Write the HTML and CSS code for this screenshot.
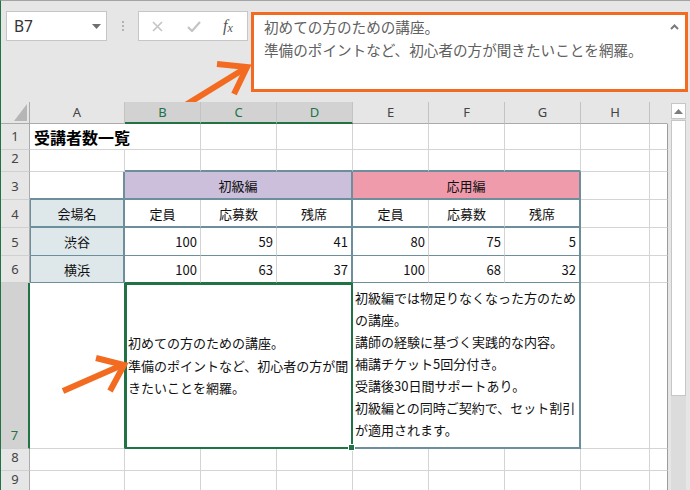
FILE: index.html
```html
<!DOCTYPE html>
<html lang="ja">
<head>
<meta charset="utf-8">
<title>受講者数一覧</title>
<link rel="stylesheet" href="styles.css">
</head>
<body>
<div class="app">
  <div class="fbar">
    <div class="namebox"><span>B7</span><svg class="dd" width="9" height="5" viewBox="0 0 9 5"><path d="M0 0H9L4.5 5Z" fill="#6f6f6f"/></svg></div>
    <div class="grip"><i></i><i></i><i></i></div>
    <div class="fxbox">
      <svg class="ico-x" width="11" height="11" viewBox="0 0 11 11"><path d="M1 1L10 10M10 1L1 10" stroke="#c4c4c4" stroke-width="1.6" fill="none"/></svg>
      <svg class="ico-ok" width="14" height="11" viewBox="0 0 14 11"><path d="M1 6L5 10L13 1" stroke="#c4c4c4" stroke-width="2.2" fill="none"/></svg>
      <span class="fx"><i>f</i><i class="sub">x</i></span>
    </div>
    <div class="formula">
      <p>初めての方のための講座。</p>
      <p>準備のポイントなど、初心者の方が聞きたいことを網羅。</p>
      <svg class="collapse" width="9" height="6" viewBox="0 0 9 6"><path d="M1 5L4.5 1.5L8 5" stroke="#7a7a7a" stroke-width="2" fill="none"/></svg>
    </div>
  </div>
  <div class="sheetwrap">
    <div class="grid">
      <!-- header row -->
      <div class="corner"><svg width="13" height="17" viewBox="0 0 13 17"><polygon points="0,17 13,17 13,0" fill="#b6b6b6"/></svg></div>
      <div class="ch">A</div>
      <div class="ch sel">B</div>
      <div class="ch sel">C</div>
      <div class="ch sel">D</div>
      <div class="ch">E</div>
      <div class="ch">F</div>
      <div class="ch">G</div>
      <div class="ch">H</div>
      <div class="ch last"></div>
      <!-- row 1 -->
      <div class="rh">1</div>
      <div class="c title span2">受講者数一覧</div>
      <div class="c"></div><div class="c"></div><div class="c"></div><div class="c"></div><div class="c"></div><div class="c"></div>
      <div class="c edge"></div>
      <!-- row 2 -->
      <div class="rh">2</div>
      <div class="c"></div>
      <div class="c tb"></div><div class="c tb"></div><div class="c tb"></div><div class="c tb"></div><div class="c tb"></div><div class="c tb"></div>
      <div class="c"></div>
      <div class="c edge"></div>
      <!-- row 3 -->
      <div class="rh">3</div>
      <div class="c tb tr"></div>
      <div class="c ctr lav tb tr span3">初級編</div>
      <div class="c ctr pink tb tr span3">応用編</div>
      <div class="c"></div>
      <div class="c edge"></div>
      <!-- row 4 -->
      <div class="rh">4</div>
      <div class="c ctr fill bl tb tr">会場名</div>
      <div class="c ctr tb">定員</div>
      <div class="c ctr tb">応募数</div>
      <div class="c ctr tb tr">残席</div>
      <div class="c ctr tb">定員</div>
      <div class="c ctr tb">応募数</div>
      <div class="c ctr tb tr">残席</div>
      <div class="c"></div>
      <div class="c edge"></div>
      <!-- row 5 -->
      <div class="rh">5</div>
      <div class="c ctr fill bl nb tr">渋谷</div>
      <div class="c num nb">100</div>
      <div class="c num nb">59</div>
      <div class="c num nb tr">41</div>
      <div class="c num nb">80</div>
      <div class="c num nb">75</div>
      <div class="c num nb tr">5</div>
      <div class="c"></div>
      <div class="c edge"></div>
      <!-- row 6 -->
      <div class="rh">6</div>
      <div class="c ctr fill bl nb tr">横浜</div>
      <div class="c num gb">100</div>
      <div class="c num gb">63</div>
      <div class="c num gb tr">37</div>
      <div class="c num nb">100</div>
      <div class="c num nb">68</div>
      <div class="c num nb tr">32</div>
      <div class="c"></div>
      <div class="c edge"></div>
      <!-- row 7 -->
      <div class="rh sel">7</div>
      <div class="c gr"></div>
      <div class="c selbox span3">初めての方のための講座。<br>準備のポイントなど、初心者の方が聞<br>きたいことを網羅。<span class="handle"></span></div>
      <div class="c note tb tr span3">初級編では物足りなくなった方のため<br>の講座。<br>講師の経験に基づく実践的な内容。<br>補講チケット5回分付き。<br>受講後30日間サポートあり。<br>初級編との同時ご契約で、セット割引<br>が適用されます。</div>
      <div class="c"></div>
      <div class="c edge"></div>
      <!-- row 8 -->
      <div class="rh">8</div>
      <div class="c"></div><div class="c"></div><div class="c"></div><div class="c"></div><div class="c"></div><div class="c"></div><div class="c"></div><div class="c"></div>
      <div class="c edge"></div>
      <!-- row 9 -->
      <div class="rh">9</div>
      <div class="c"></div><div class="c"></div><div class="c"></div><div class="c"></div><div class="c"></div><div class="c"></div><div class="c"></div><div class="c"></div>
      <div class="c edge"></div>
    </div>
    <div class="vscroll">
      <div class="up"><svg width="9" height="5" viewBox="0 0 9 5"><path d="M0 5H9L4.5 0Z" fill="#7d7d7d"/></svg></div>
      <div class="thumb"></div>
    </div>
  </div>
  <svg class="arrows" width="690" height="490" viewBox="0 0 690 490">
    <defs><clipPath id="above"><rect x="0" y="0" width="690" height="102"/></clipPath></defs>
    <g stroke="#f26b21" stroke-width="6" fill="none" stroke-linejoin="miter">
      <path clip-path="url(#above)" d="M184 106L244 69"/>
      <path d="M217 64L247 67L234 94"/>
      <path d="M63 391L120 366"/>
      <path d="M96 358L124 365L110 391"/>
    </g>
  </svg>
</div>
</body>
</html>
```

FILE: styles.css
```css
* { box-sizing: border-box; margin: 0; padding: 0; }
html, body { width: 690px; height: 490px; overflow: hidden; }
body {
  background: #e6e6e6;
  font-family: "Noto Sans CJK JP", "Noto Sans", sans-serif;
}
.app {
  --teal: #6d8f9b;
  --grn: #217346;
  position: relative;
  width: 690px;
  height: 490px;
  overflow: hidden;
  background: #e6e6e6;
  border-top: 1px solid #a3a3a3;
  border-left: 1px solid #217346;
}

/* formula bar */
.fbar {
  display: flex;
  align-items: flex-start;
  height: 101px;
  padding: 10px 0 0 5px;
}
.namebox {
  width: 101px;
  height: 30px;
  background: #fff;
  border: 1px solid #c6c6c6;
  display: flex;
  align-items: center;
  justify-content: space-between;
  padding: 0 5px 0 7px;
  font-family: "Noto Sans", sans-serif;
  font-size: 15.5px;
  color: #333;
}
.grip {
  margin: 10px 0 0 15px;
  width: 2px;
  display: flex;
  flex-direction: column;
  gap: 2px;
}
.grip i { display: block; width: 2px; height: 2px; background: #b3b3b3; }
.fxbox {
  margin-left: 14px;
  width: 110px;
  height: 30px;
  background: #fff;
  border: 1px solid #c6c6c6;
  display: flex;
  align-items: center;
  padding-left: 13px;
}
.ico-ok { margin-left: 24px; }
.fx {
  margin-left: 22px;
  font-family: "Liberation Serif", serif;
  font-size: 16px;
  color: #555;
  line-height: 1;
}
.fx .sub { font-size: 12px; position: relative; top: 1px; }
.formula {
  position: relative;
  margin: 1px 0 0 3px;
  width: 437px;
  height: 80px;
  background: #fff;
  border: 3px solid #f26b21;
  padding: 0 10px;
  font-size: 14.6px;
  line-height: 23px;
  color: #606060;
  white-space: nowrap;
}
.collapse { position: absolute; right: 6px; top: 9px; }

/* sheet */
.sheetwrap { display: flex; align-items: flex-start; }
.grid {
  display: grid;
  grid-template-columns: 29px 95px repeat(6, 76px) 69px 18px;
  grid-template-rows: 22px 26px 22px 28px 28px 28px 27px 166px 22px 22px;
  width: 667px;
}
.corner {
  background: #e6e6e6;
  border-right: 1px solid #ababab;
  border-bottom: 1px solid #ababab;
  display: flex;
  justify-content: flex-end;
  align-items: flex-end;
  padding: 0 2px 2px 0;
}
.ch {
  background: #e6e6e6;
  border-right: 1px solid #c3c3c3;
  border-bottom: 1px solid #ababab;
  display: flex;
  align-items: center;
  justify-content: center;
  padding-bottom: 1px;
  font-family: "Noto Sans", sans-serif;
  font-size: 13px;
  color: #444;
}
.ch.sel {
  background: #d2d2d2;
  color: var(--grn);
  border-bottom: 2px solid var(--grn);
}
.ch.last { border-right-color: #e6e6e6; }
.rh {
  background: #e6e6e6;
  border-right: 1px solid #ababab;
  border-bottom: 1px solid #d0d0d0;
  display: flex;
  align-items: flex-end;
  justify-content: center;
  padding-bottom: 3px;
  line-height: 19px;
  font-family: "Noto Sans", sans-serif;
  font-size: 13px;
  color: #444;
}
.rh.sel {
  background: #d2d2d2;
  color: var(--grn);
  border-right: 2px solid var(--grn);
}
.c {
  position: relative;
  background: #fff;
  border-right: 1px solid #d4d4d4;
  border-bottom: 1px solid #d4d4d4;
  display: flex;
  align-items: center;
  padding: 0 3px;
  white-space: nowrap;
  font-size: 13px;
  color: #111;
}
.span2 { grid-column: span 2; }
.span3 { grid-column: span 3; }
.title { font-size: 16px; font-weight: 700; color: #000; padding-left: 4px; }
.ctr { justify-content: center; }
.num { justify-content: flex-end; }
.lav { background: #cbbfdc; }
.pink { background: #ef9bac; }
.fill { background: #dee7ea; }
.tb { border-bottom: 2px solid var(--teal); }
.tr { border-right: 2px solid var(--teal); }
.nb { border-bottom: 1px solid var(--teal); }
.bl { border-left: 1px solid var(--teal); }
.gb { border-bottom-color: var(--grn); }
.gr { border-right-color: var(--grn); }
.edge { border-right-color: #9c9c9c; }
.selbox {
  border: 2px solid var(--grn);
  padding: 0 1px;
  line-height: 22.5px;
  align-items: center;
}
.handle {
  position: absolute;
  right: -4px;
  bottom: -4px;
  width: 7px;
  height: 7px;
  background: var(--grn);
  border: 1px solid #fff;
  z-index: 2;
}
.note {
  align-items: flex-start;
  padding: 4px 2px 0;
  line-height: 22px;
}

/* scrollbar */
.vscroll {
  margin: 1px 0 0 3px;
  width: 15px;
  height: 400px;
  display: flex;
  flex-direction: column;
  background: #dcdcdc;
}
.up {
  height: 16px;
  background: #fff;
  border: 1px solid #c6c6c6;
  display: flex;
  align-items: center;
  justify-content: center;
}
.thumb {
  margin-top: 1px;
  height: 276px;
  background: #fff;
  border: 1px solid #c6c6c6;
}

/* annotation arrows */
.arrows {
  position: absolute;
  top: -1px;
  left: -1px;
  pointer-events: none;
  z-index: 5;
}
```
